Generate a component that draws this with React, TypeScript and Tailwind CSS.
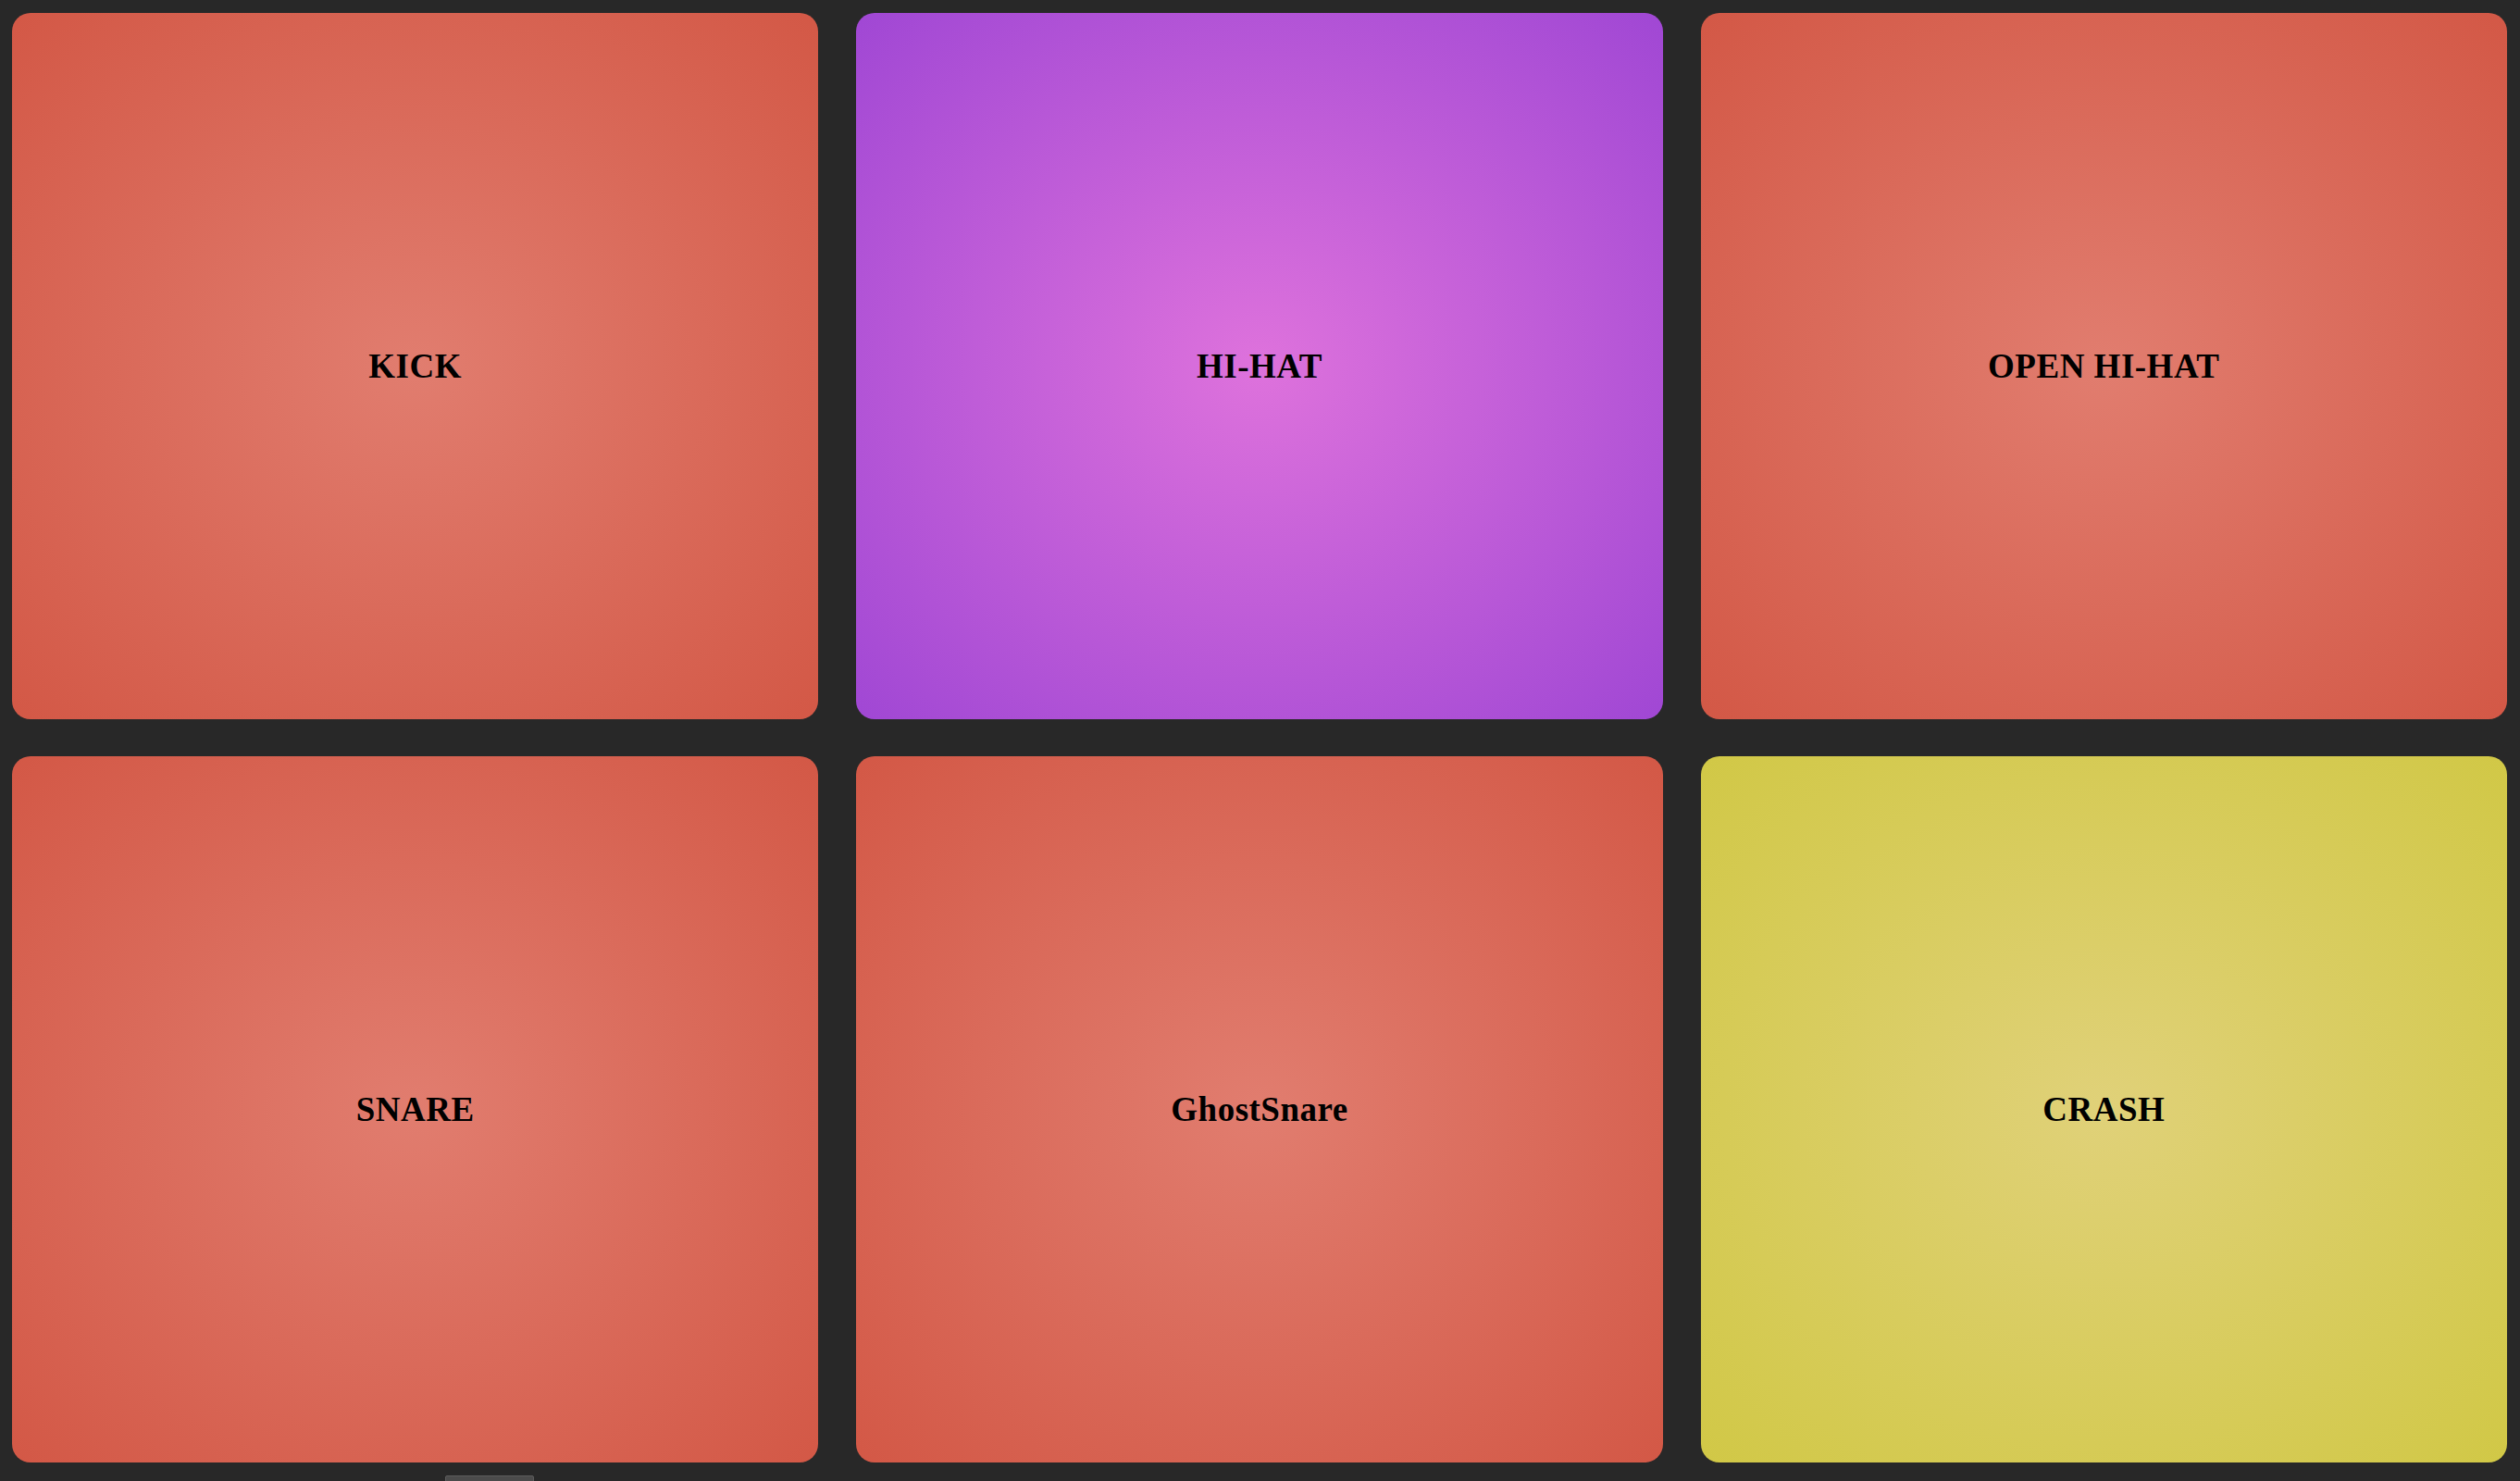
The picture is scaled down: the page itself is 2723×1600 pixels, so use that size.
const pads = [
  { name: 'KICK', bg: 'bg-[radial-gradient(#e17d6f,#d35846)]' },
  { name: 'HI-HAT', bg: 'bg-[radial-gradient(#de72dc,#a047d4)]' },
  { name: 'OPEN HI-HAT', bg: 'bg-[radial-gradient(#e17d6f,#d35846)]' },
  { name: 'SNARE', bg: 'bg-[radial-gradient(#e17d6f,#d35846)]' },
  { name: 'GhostSnare', bg: 'bg-[radial-gradient(#e17d6f,#d35846)]' },
  { name: 'CRASH', bg: 'bg-[radial-gradient(#e0d179,#d1c846)]' },
];

export default function App() {
  return (
    <div className="min-h-screen bg-[#282828] overflow-hidden">
      {/* Drum pads */}
      <div className="grid grid-cols-3 gap-x-[41px] gap-y-[40px] pl-[13px] pr-[14px] pt-[14px]">
        {pads.map((pad) => (
          <button
            key={pad.name}
            className={`h-[763px] rounded-[20px] flex items-center justify-center ${pad.bg}`}
          >
            <span className="font-['Liberation_Serif',serif] font-bold text-[37px] text-black tracking-[0.5px]">
              {pad.name}
            </span>
          </button>
        ))}
      </div>

      {/* control peeking below the fold */}
      <div className="ml-[481px] mt-[14px] w-[96px] h-[10px] bg-[#4b4b4b] border border-[#5c5c5c] rounded-t-[2px]"></div>
    </div>
  );
}
